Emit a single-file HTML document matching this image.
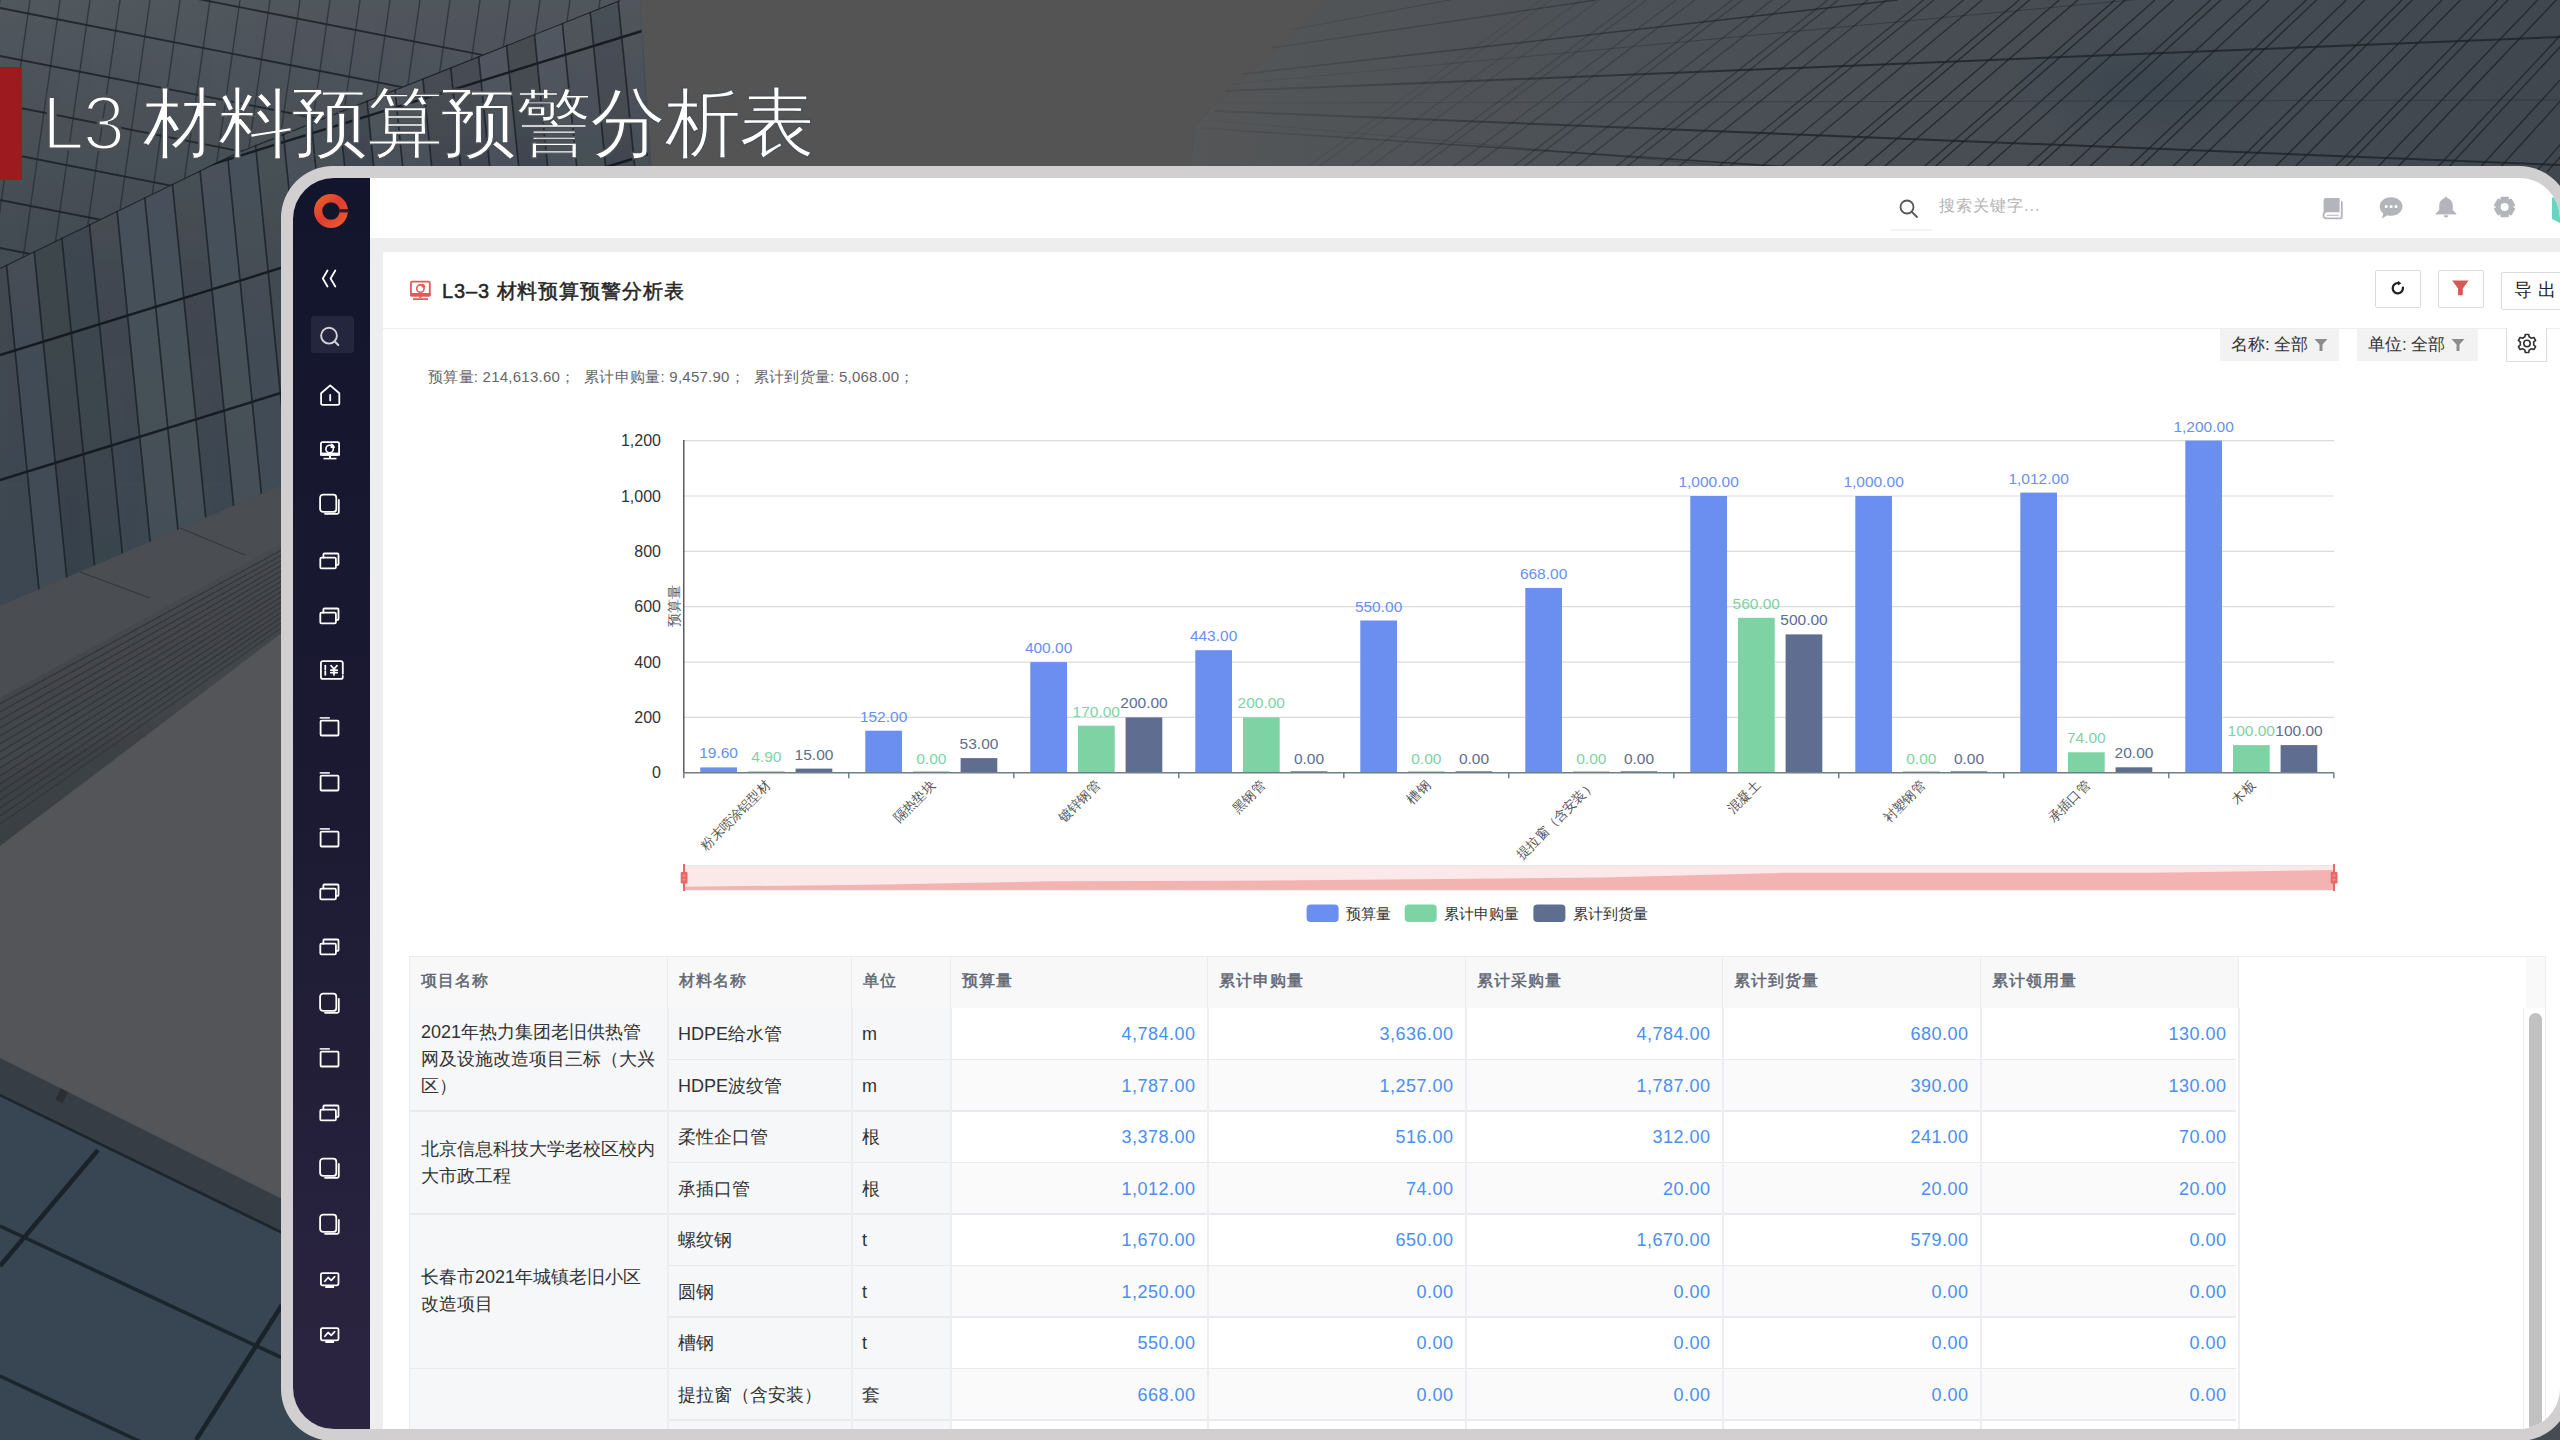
<!DOCTYPE html><html><head><meta charset="utf-8"><title>L3 材料预算预警分析表</title><style>
*{box-sizing:border-box;margin:0;padding:0}
html,body{width:2560px;height:1440px;overflow:hidden;background:#454c53;font-family:"Liberation Sans", sans-serif}
.bg{position:absolute;left:0;top:0}
.abs{position:absolute}
.redbar{position:absolute;left:0;top:67px;width:22px;height:113px;background:#9d1b1f}
.title{position:absolute;left:42px;top:78px;font-size:76px;line-height:90px;font-weight:300;color:#fff;white-space:nowrap;letter-spacing:-1.5px;-webkit-text-stroke:1.4px #4a5056}
.frame{position:absolute;left:281px;top:166px;width:2290px;height:1275px;background:#d1cfd0;border-radius:52px}
.screen{position:absolute;left:293px;top:178px;width:2267px;height:1251px;border-radius:41px;overflow:hidden;background:#eeeeee}
.pg{position:absolute;left:-293px;top:-178px;width:2560px;height:1440px}
.side{position:absolute;left:293px;top:178px;width:77px;height:1262px;background:linear-gradient(180deg,#12152b 0%,#1c1a33 50%,#2c2541 100%)}
.hdr{position:absolute;left:370px;top:178px;width:2190px;height:60px;background:#fff}
.card{position:absolute;left:383px;top:252px;width:2177px;height:1200px;background:#fff}
.t{position:absolute;white-space:nowrap}
</style></head><body><svg class="bg" width="2560" height="1440" viewBox="0 0 2560 1440"><defs><clipPath id="ridgeU"><polygon points="0,0 620,0 236,153 0,268"/></clipPath><clipPath id="ridgeL"><polygon points="0,268 236,153 620,0 700,0 700,700 0,700"/></clipPath><clipPath id="tl"><polygon points="0,0 640,0 652,230 340,230 340,460 0,606"/></clipPath><clipPath id="rb"><polygon points="1330,0 2560,0 2560,240 1190,240 1190,170 1195,125"/></clipPath><clipPath id="bd"><polygon points="0,698 340,512 340,589 0,846"/></clipPath><clipPath id="gl"><polygon points="0,1058 340,1228 340,1440 0,1440"/></clipPath><linearGradient id="bandg" x1="0" y1="0" x2="0.35" y2="1"><stop offset="0" stop-color="#4a4e53"/><stop offset="0.6" stop-color="#44484d"/><stop offset="1" stop-color="#363b40"/></linearGradient><linearGradient id="rbg" x1="0" y1="0" x2="1" y2="0"><stop offset="0" stop-color="#545657"/><stop offset="0.3" stop-color="#4c5157"/><stop offset="1" stop-color="#40474e"/></linearGradient><linearGradient id="tlg" x1="0" y1="0" x2="0" y2="1"><stop offset="0" stop-color="#4a5057"/><stop offset="0.5" stop-color="#434b53"/><stop offset="1" stop-color="#3d4852"/></linearGradient><linearGradient id="fanfade" gradientUnits="userSpaceOnUse" x1="1200" y1="0" x2="1750" y2="0"><stop offset="0" stop-color="#1b2127" stop-opacity="0.1"/><stop offset="1" stop-color="#1b2127" stop-opacity="0.85"/></linearGradient><linearGradient id="topfade" x1="0" y1="0" x2="0" y2="1"><stop offset="0" stop-color="#5e646b" stop-opacity="0.35"/><stop offset="1" stop-color="#5e646b" stop-opacity="0"/></linearGradient><radialGradient id="patch"><stop offset="0" stop-color="#34414d" stop-opacity="0.6"/><stop offset="1" stop-color="#34414d" stop-opacity="0"/></radialGradient></defs><rect width="2560" height="1440" fill="#454c53"/><polygon points="0,0 640,0 652,230 340,230 340,460 0,606" fill="url(#tlg)"/><polygon points="640,0 1330,0 1195,125 1190,170 652,170" fill="#545455"/><polygon points="1330,0 2560,0 2560,240 1190,240 1190,170 1195,125" fill="url(#rbg)"/><polygon points="0,606 340,460 340,512 0,698" fill="#4a4d52"/><line x1="80" y1="572" x2="150" y2="598" stroke="#33383d" stroke-width="1.2"/><line x1="180" y1="528" x2="245" y2="555" stroke="#33383d" stroke-width="1.2"/><polygon points="0,698 340,512 340,589 0,846" fill="url(#bandg)"/><polygon points="0,846 340,589 340,1228 0,1058" fill="#545558"/><polygon points="0,1058 340,1228 340,1440 0,1440" fill="#374652"/><g clip-path="url(#tl)"><rect x="0" y="0" width="660" height="260" fill="url(#topfade)"/><g clip-path="url(#ridgeU)"><line x1="0" y1="-40" x2="660" y2="90" stroke="#161b20" stroke-width="1.8" opacity="0.75"/><line x1="0" y1="8" x2="660" y2="138" stroke="#161b20" stroke-width="1.8" opacity="0.75"/><line x1="0" y1="56" x2="660" y2="186" stroke="#161b20" stroke-width="1.8" opacity="0.75"/><line x1="0" y1="104" x2="660" y2="234" stroke="#161b20" stroke-width="1.8" opacity="0.75"/><line x1="0" y1="152" x2="660" y2="282" stroke="#161b20" stroke-width="1.8" opacity="0.75"/><line x1="0" y1="200" x2="660" y2="330" stroke="#161b20" stroke-width="1.8" opacity="0.75"/><line x1="0" y1="248" x2="660" y2="378" stroke="#161b20" stroke-width="1.8" opacity="0.75"/><line x1="0" y1="296" x2="660" y2="426" stroke="#161b20" stroke-width="1.8" opacity="0.75"/><line x1="-60" y1="0" x2="-100" y2="280" stroke="#1f252b" stroke-width="1.4" opacity="0.6"/><line x1="-30" y1="0" x2="-70" y2="280" stroke="#1f252b" stroke-width="1.4" opacity="0.6"/><line x1="0" y1="0" x2="-40" y2="280" stroke="#1f252b" stroke-width="1.4" opacity="0.6"/><line x1="30" y1="0" x2="-10" y2="280" stroke="#1f252b" stroke-width="1.4" opacity="0.6"/><line x1="60" y1="0" x2="20" y2="280" stroke="#1f252b" stroke-width="1.4" opacity="0.6"/><line x1="90" y1="0" x2="50" y2="280" stroke="#1f252b" stroke-width="1.4" opacity="0.6"/><line x1="120" y1="0" x2="80" y2="280" stroke="#1f252b" stroke-width="1.4" opacity="0.6"/><line x1="150" y1="0" x2="110" y2="280" stroke="#1f252b" stroke-width="1.4" opacity="0.6"/><line x1="180" y1="0" x2="140" y2="280" stroke="#1f252b" stroke-width="1.4" opacity="0.6"/><line x1="210" y1="0" x2="170" y2="280" stroke="#1f252b" stroke-width="1.4" opacity="0.6"/><line x1="240" y1="0" x2="200" y2="280" stroke="#1f252b" stroke-width="1.4" opacity="0.6"/><line x1="270" y1="0" x2="230" y2="280" stroke="#1f252b" stroke-width="1.4" opacity="0.6"/><line x1="300" y1="0" x2="260" y2="280" stroke="#1f252b" stroke-width="1.4" opacity="0.6"/><line x1="330" y1="0" x2="290" y2="280" stroke="#1f252b" stroke-width="1.4" opacity="0.6"/><line x1="360" y1="0" x2="320" y2="280" stroke="#1f252b" stroke-width="1.4" opacity="0.6"/><line x1="390" y1="0" x2="350" y2="280" stroke="#1f252b" stroke-width="1.4" opacity="0.6"/><line x1="420" y1="0" x2="380" y2="280" stroke="#1f252b" stroke-width="1.4" opacity="0.6"/><line x1="450" y1="0" x2="410" y2="280" stroke="#1f252b" stroke-width="1.4" opacity="0.6"/><line x1="480" y1="0" x2="440" y2="280" stroke="#1f252b" stroke-width="1.4" opacity="0.6"/><line x1="510" y1="0" x2="470" y2="280" stroke="#1f252b" stroke-width="1.4" opacity="0.6"/><line x1="540" y1="0" x2="500" y2="280" stroke="#1f252b" stroke-width="1.4" opacity="0.6"/><line x1="570" y1="0" x2="530" y2="280" stroke="#1f252b" stroke-width="1.4" opacity="0.6"/><line x1="600" y1="0" x2="560" y2="280" stroke="#1f252b" stroke-width="1.4" opacity="0.6"/><line x1="630" y1="0" x2="590" y2="280" stroke="#1f252b" stroke-width="1.4" opacity="0.6"/><line x1="660" y1="0" x2="620" y2="280" stroke="#1f252b" stroke-width="1.4" opacity="0.6"/><line x1="690" y1="0" x2="650" y2="280" stroke="#1f252b" stroke-width="1.4" opacity="0.6"/></g><g clip-path="url(#ridgeL)"><polygon points="-20,0 9,0 79,700 50,700" fill="#4c5862" opacity="0.25"/><polygon points="9,0 38,0 108,700 79,700" fill="#2f363d" opacity="0.25"/><polygon points="38,0 67,0 137,700 108,700" fill="#353d45" opacity="0.25"/><polygon points="96,0 125,0 195,700 166,700" fill="#56626c" opacity="0.25"/><polygon points="125,0 154,0 224,700 195,700" fill="#56626c" opacity="0.25"/><polygon points="183,0 212,0 282,700 253,700" fill="#56626c" opacity="0.25"/><polygon points="212,0 241,0 311,700 282,700" fill="#4c5862" opacity="0.25"/><polygon points="270,0 299,0 369,700 340,700" fill="#56626c" opacity="0.25"/><polygon points="328,0 357,0 427,700 398,700" fill="#2f363d" opacity="0.25"/><polygon points="357,0 386,0 456,700 427,700" fill="#56626c" opacity="0.25"/><polygon points="386,0 415,0 485,700 456,700" fill="#56626c" opacity="0.25"/><polygon points="415,0 444,0 514,700 485,700" fill="#353d45" opacity="0.25"/><polygon points="444,0 473,0 543,700 514,700" fill="#353d45" opacity="0.25"/><polygon points="473,0 502,0 572,700 543,700" fill="#56626c" opacity="0.25"/><polygon points="502,0 531,0 601,700 572,700" fill="#2f363d" opacity="0.25"/><polygon points="531,0 560,0 630,700 601,700" fill="#56626c" opacity="0.25"/><polygon points="589,0 618,0 688,700 659,700" fill="#353d45" opacity="0.25"/><line x1="0" y1="355" x2="700" y2="138.0" stroke="#14191e" stroke-width="2.4" opacity="0.9"/><line x1="0" y1="480" x2="700" y2="263.0" stroke="#14191e" stroke-width="2.4" opacity="0.9"/><line x1="0" y1="230" x2="700" y2="13.0" stroke="#14191e" stroke-width="2.4" opacity="0.9"/><line x1="-20" y1="0" x2="50" y2="700" stroke="#1a2026" stroke-width="1.7" opacity="0.8"/><line x1="9" y1="0" x2="79" y2="700" stroke="#1a2026" stroke-width="1.7" opacity="0.8"/><line x1="38" y1="0" x2="108" y2="700" stroke="#1a2026" stroke-width="1.7" opacity="0.8"/><line x1="67" y1="0" x2="137" y2="700" stroke="#1a2026" stroke-width="1.7" opacity="0.8"/><line x1="96" y1="0" x2="166" y2="700" stroke="#1a2026" stroke-width="1.7" opacity="0.8"/><line x1="125" y1="0" x2="195" y2="700" stroke="#1a2026" stroke-width="1.7" opacity="0.8"/><line x1="154" y1="0" x2="224" y2="700" stroke="#1a2026" stroke-width="1.7" opacity="0.8"/><line x1="183" y1="0" x2="253" y2="700" stroke="#1a2026" stroke-width="1.7" opacity="0.8"/><line x1="212" y1="0" x2="282" y2="700" stroke="#1a2026" stroke-width="1.7" opacity="0.8"/><line x1="241" y1="0" x2="311" y2="700" stroke="#1a2026" stroke-width="1.7" opacity="0.8"/><line x1="270" y1="0" x2="340" y2="700" stroke="#1a2026" stroke-width="1.7" opacity="0.8"/><line x1="299" y1="0" x2="369" y2="700" stroke="#1a2026" stroke-width="1.7" opacity="0.8"/><line x1="328" y1="0" x2="398" y2="700" stroke="#1a2026" stroke-width="1.7" opacity="0.8"/><line x1="357" y1="0" x2="427" y2="700" stroke="#1a2026" stroke-width="1.7" opacity="0.8"/><line x1="386" y1="0" x2="456" y2="700" stroke="#1a2026" stroke-width="1.7" opacity="0.8"/><line x1="415" y1="0" x2="485" y2="700" stroke="#1a2026" stroke-width="1.7" opacity="0.8"/><line x1="444" y1="0" x2="514" y2="700" stroke="#1a2026" stroke-width="1.7" opacity="0.8"/><line x1="473" y1="0" x2="543" y2="700" stroke="#1a2026" stroke-width="1.7" opacity="0.8"/><line x1="502" y1="0" x2="572" y2="700" stroke="#1a2026" stroke-width="1.7" opacity="0.8"/><line x1="531" y1="0" x2="601" y2="700" stroke="#1a2026" stroke-width="1.7" opacity="0.8"/><line x1="560" y1="0" x2="630" y2="700" stroke="#1a2026" stroke-width="1.7" opacity="0.8"/><line x1="589" y1="0" x2="659" y2="700" stroke="#1a2026" stroke-width="1.7" opacity="0.8"/><line x1="618" y1="0" x2="688" y2="700" stroke="#1a2026" stroke-width="1.7" opacity="0.8"/><line x1="647" y1="0" x2="717" y2="700" stroke="#1a2026" stroke-width="1.7" opacity="0.8"/><line x1="676" y1="0" x2="746" y2="700" stroke="#1a2026" stroke-width="1.7" opacity="0.8"/><line x1="705" y1="0" x2="775" y2="700" stroke="#1a2026" stroke-width="1.7" opacity="0.8"/><polyline points="0,268 236,153 620,0" stroke="#14191e" stroke-width="2" fill="none" opacity="0.8"/></g></g><ellipse cx="2150" cy="85" rx="140" ry="55" fill="url(#patch)"/><g><line x1="1214" y1="111" x2="2560" y2="165" stroke="url(#fanfade)" stroke-width="2.0" opacity="0.9"/><line x1="1225" y1="91" x2="2560" y2="37" stroke="url(#fanfade)" stroke-width="2.0" opacity="0.9"/><line x1="1242" y1="74" x2="1898" y2="0" stroke="url(#fanfade)" stroke-width="1.6" opacity="0.8"/><line x1="1271" y1="48" x2="1596" y2="0" stroke="url(#fanfade)" stroke-width="1.4" opacity="0.7"/><line x1="1203" y1="128" x2="1984" y2="180" stroke="url(#fanfade)" stroke-width="1.6" opacity="0.8"/><line x1="1290" y1="30" x2="1450" y2="0" stroke="url(#fanfade)" stroke-width="1.2" opacity="0.6"/><line x1="1232" y1="84" x2="2560" y2="-40" stroke="url(#fanfade)" stroke-width="1.0" opacity="0.45"/><line x1="1219" y1="103" x2="2560" y2="100" stroke="url(#fanfade)" stroke-width="1.0" opacity="0.4"/><line x1="1208" y1="120" x2="2560" y2="240" stroke="url(#fanfade)" stroke-width="1.0" opacity="0.4"/><line x1="1300.0" y1="172" x2="1540.8" y2="0" stroke="#1c2227" stroke-width="1.3" opacity="0.10"/><line x1="1311.0" y1="172" x2="1551.0" y2="0" stroke="#1c2227" stroke-width="1.3" opacity="0.11"/><line x1="1343.0" y1="172" x2="1580.7" y2="0" stroke="#1c2227" stroke-width="1.3" opacity="0.16"/><line x1="1363.0" y1="172" x2="1599.3" y2="0" stroke="#1c2227" stroke-width="1.3" opacity="0.18"/><line x1="1403.0" y1="172" x2="1636.5" y2="0" stroke="#1c2227" stroke-width="1.3" opacity="0.24"/><line x1="1414.0" y1="172" x2="1646.7" y2="0" stroke="#1c2227" stroke-width="1.3" opacity="0.25"/><line x1="1446.0" y1="172" x2="1676.4" y2="0" stroke="#1c2227" stroke-width="1.3" opacity="0.29"/><line x1="1466.0" y1="172" x2="1695.0" y2="0" stroke="#1c2227" stroke-width="1.3" opacity="0.32"/><line x1="1506.0" y1="172" x2="1732.2" y2="0" stroke="#1c2227" stroke-width="1.3" opacity="0.37"/><line x1="1517.0" y1="172" x2="1742.4" y2="0" stroke="#1c2227" stroke-width="1.3" opacity="0.39"/><line x1="1549.0" y1="172" x2="1772.1" y2="0" stroke="#1c2227" stroke-width="1.3" opacity="0.43"/><line x1="1569.0" y1="172" x2="1790.7" y2="0" stroke="#1c2227" stroke-width="1.3" opacity="0.46"/><line x1="1609.0" y1="172" x2="1827.9" y2="0" stroke="#1c2227" stroke-width="1.3" opacity="0.51"/><line x1="1620.0" y1="172" x2="1838.1" y2="0" stroke="#1c2227" stroke-width="1.3" opacity="0.53"/><line x1="1652.0" y1="172" x2="1867.8" y2="0" stroke="#1c2227" stroke-width="1.3" opacity="0.57"/><line x1="1672.0" y1="172" x2="1886.4" y2="0" stroke="#1c2227" stroke-width="1.3" opacity="0.60"/><line x1="1712.0" y1="172" x2="1923.6" y2="0" stroke="#1c2227" stroke-width="1.3" opacity="0.65"/><line x1="1723.0" y1="172" x2="1933.8" y2="0" stroke="#1c2227" stroke-width="1.3" opacity="0.66"/><line x1="1755.0" y1="172" x2="1963.5" y2="0" stroke="#1c2227" stroke-width="1.3" opacity="0.71"/><line x1="1775.0" y1="172" x2="1982.1" y2="0" stroke="#1c2227" stroke-width="1.3" opacity="0.73"/><line x1="1815.0" y1="172" x2="2019.2" y2="0" stroke="#1c2227" stroke-width="1.3" opacity="0.79"/><line x1="1826.0" y1="172" x2="2029.5" y2="0" stroke="#1c2227" stroke-width="1.3" opacity="0.80"/><line x1="1858.0" y1="172" x2="2059.2" y2="0" stroke="#1c2227" stroke-width="1.3" opacity="0.80"/><line x1="1878.0" y1="172" x2="2077.8" y2="0" stroke="#1c2227" stroke-width="1.3" opacity="0.80"/><line x1="1918.0" y1="172" x2="2114.9" y2="0" stroke="#1c2227" stroke-width="1.3" opacity="0.80"/><line x1="1929.0" y1="172" x2="2125.2" y2="0" stroke="#1c2227" stroke-width="1.3" opacity="0.80"/><line x1="1961.0" y1="172" x2="2154.9" y2="0" stroke="#1c2227" stroke-width="1.3" opacity="0.80"/><line x1="1981.0" y1="172" x2="2173.5" y2="0" stroke="#1c2227" stroke-width="1.3" opacity="0.80"/><line x1="2021.0" y1="172" x2="2210.6" y2="0" stroke="#1c2227" stroke-width="1.3" opacity="0.80"/><line x1="2032.0" y1="172" x2="2220.8" y2="0" stroke="#1c2227" stroke-width="1.3" opacity="0.80"/><line x1="2064.0" y1="172" x2="2250.6" y2="0" stroke="#1c2227" stroke-width="1.3" opacity="0.80"/><line x1="2084.0" y1="172" x2="2269.1" y2="0" stroke="#1c2227" stroke-width="1.3" opacity="0.80"/><line x1="2124.0" y1="172" x2="2306.3" y2="0" stroke="#1c2227" stroke-width="1.3" opacity="0.80"/><line x1="2135.0" y1="172" x2="2316.5" y2="0" stroke="#1c2227" stroke-width="1.3" opacity="0.80"/><line x1="2167.0" y1="172" x2="2346.3" y2="0" stroke="#1c2227" stroke-width="1.3" opacity="0.80"/><line x1="2187.0" y1="172" x2="2364.8" y2="0" stroke="#1c2227" stroke-width="1.3" opacity="0.80"/><line x1="2227.0" y1="172" x2="2402.0" y2="0" stroke="#1c2227" stroke-width="1.3" opacity="0.80"/><line x1="2238.0" y1="172" x2="2412.2" y2="0" stroke="#1c2227" stroke-width="1.3" opacity="0.80"/><line x1="2270.0" y1="172" x2="2441.9" y2="0" stroke="#1c2227" stroke-width="1.3" opacity="0.80"/><line x1="2290.0" y1="172" x2="2460.5" y2="0" stroke="#1c2227" stroke-width="1.3" opacity="0.80"/><line x1="2330.0" y1="172" x2="2497.7" y2="0" stroke="#1c2227" stroke-width="1.3" opacity="0.80"/><line x1="2341.0" y1="172" x2="2507.9" y2="0" stroke="#1c2227" stroke-width="1.3" opacity="0.80"/><line x1="2373.0" y1="172" x2="2537.6" y2="0" stroke="#1c2227" stroke-width="1.3" opacity="0.80"/><line x1="2393.0" y1="172" x2="2556.2" y2="0" stroke="#1c2227" stroke-width="1.3" opacity="0.80"/><line x1="2433.0" y1="172" x2="2593.4" y2="0" stroke="#1c2227" stroke-width="1.3" opacity="0.80"/><line x1="2444.0" y1="172" x2="2603.6" y2="0" stroke="#1c2227" stroke-width="1.3" opacity="0.80"/><line x1="2476.0" y1="172" x2="2633.3" y2="0" stroke="#1c2227" stroke-width="1.3" opacity="0.80"/><line x1="2496.0" y1="172" x2="2651.9" y2="0" stroke="#1c2227" stroke-width="1.3" opacity="0.80"/><line x1="2536.0" y1="172" x2="2689.1" y2="0" stroke="#1c2227" stroke-width="1.3" opacity="0.80"/><line x1="2547.0" y1="172" x2="2699.3" y2="0" stroke="#1c2227" stroke-width="1.3" opacity="0.80"/><line x1="2579.0" y1="172" x2="2730.4" y2="0" stroke="#1c2227" stroke-width="1.3" opacity="0.80"/><line x1="2599.0" y1="172" x2="2750.4" y2="0" stroke="#1c2227" stroke-width="1.3" opacity="0.80"/></g><g clip-path="url(#bd)"><line x1="0" y1="704" x2="340" y2="518.0" stroke="#2f3438" stroke-width="1.1" opacity="0.8"/><line x1="0" y1="712" x2="340" y2="522.6" stroke="#2f3438" stroke-width="1.1" opacity="0.8"/><line x1="0" y1="720" x2="340" y2="527.2" stroke="#2f3438" stroke-width="1.1" opacity="0.8"/><line x1="0" y1="728" x2="340" y2="531.8" stroke="#2f3438" stroke-width="1.1" opacity="0.8"/><line x1="0" y1="736" x2="340" y2="536.4" stroke="#2f3438" stroke-width="1.1" opacity="0.8"/><line x1="0" y1="744" x2="340" y2="541.0" stroke="#2f3438" stroke-width="1.1" opacity="0.8"/><line x1="0" y1="752" x2="340" y2="545.6" stroke="#2f3438" stroke-width="1.1" opacity="0.8"/><line x1="0" y1="760" x2="340" y2="550.2" stroke="#2f3438" stroke-width="1.1" opacity="0.8"/><line x1="0" y1="768" x2="340" y2="554.8" stroke="#2f3438" stroke-width="1.1" opacity="0.8"/><line x1="0" y1="776" x2="340" y2="559.4" stroke="#2f3438" stroke-width="1.1" opacity="0.8"/><line x1="0" y1="784" x2="340" y2="564.0" stroke="#2f3438" stroke-width="1.1" opacity="0.8"/><line x1="0" y1="792" x2="340" y2="568.6" stroke="#2f3438" stroke-width="1.1" opacity="0.8"/><line x1="0" y1="800" x2="340" y2="573.2" stroke="#2f3438" stroke-width="1.1" opacity="0.8"/><line x1="0" y1="808" x2="340" y2="577.8" stroke="#2f3438" stroke-width="1.1" opacity="0.8"/><line x1="0" y1="816" x2="340" y2="582.4" stroke="#2f3438" stroke-width="1.1" opacity="0.8"/><line x1="0" y1="824" x2="340" y2="587.0" stroke="#2f3438" stroke-width="1.1" opacity="0.8"/></g><g clip-path="url(#gl)"><polygon points="0,1058 340,1228 340,1261 0,1095" fill="#363d45"/><line x1="0" y1="1095" x2="340" y2="1261" stroke="#1c242c" stroke-width="2.5"/><line x1="0" y1="1226" x2="340" y2="1385" stroke="#1c242c" stroke-width="3.5"/><line x1="0" y1="1376" x2="340" y2="1535" stroke="#1c242c" stroke-width="3.5"/><line x1="98" y1="1150" x2="0" y2="1266" stroke="#1a222a" stroke-width="4.5"/><line x1="282" y1="1305" x2="196" y2="1440" stroke="#1a222a" stroke-width="4.5"/><rect x="58" y="1088" width="8" height="14" fill="#2a2f34" transform="rotate(25 62 1095)"/></g></svg><div class="redbar"></div><div class="title"><span style="-webkit-text-stroke:3px #4a5056">L3</span> 材料预算预警分析表</div><div class="frame"></div><div class="screen"><div class="pg"><div class="side"></div><svg class="abs" style="left:310px;top:190px" width="42" height="42" viewBox="0 0 42 42"><defs><linearGradient id="lg1" x1="0" y1="0" x2="1" y2="1"><stop offset="0" stop-color="#e8602c"/><stop offset="0.45" stop-color="#e23a30"/><stop offset="1" stop-color="#e9592e"/></linearGradient></defs><circle cx="21" cy="21" r="12.8" fill="none" stroke="url(#lg1)" stroke-width="8.2"/><rect x="29.5" y="19.2" width="10" height="3.2" fill="#3a1524"/></svg><svg class="abs" style="left:318px;top:266px" width="24" height="24" viewBox="0 0 24 24"><path d="M9.5 4.5 L4.8 12.5 L9.5 20.5 M17.3 4.5 L12.6 12.5 L17.3 20.5" stroke="#fff" stroke-width="1.8" fill="none" stroke-linecap="round" stroke-linejoin="round"/></svg><div class="abs" style="left:311px;top:316px;width:43px;height:37px;background:#23263d;border-radius:3px"></div><svg class="abs" style="left:318px;top:324px" width="24" height="24" viewBox="0 0 24 24"><circle cx="11" cy="11.7" r="7.9" stroke="#d2d2d8" stroke-width="1.9" fill="none"/><path d="M16.6 17.3 L20.3 21" stroke="#d2d2d8" stroke-width="2" stroke-linecap="round"/></svg><svg class="abs" style="left:318px;top:383px" width="24" height="24" viewBox="0 0 24 24"><path d="M3.1 10.3 L12.2 2.4 L21.3 10.3 V20.4 A1.5 1.5 0 0 1 19.8 21.9 H4.6 A1.5 1.5 0 0 1 3.1 20.4 Z" stroke="#fff" stroke-width="1.8" fill="none" stroke-linecap="round" stroke-linejoin="round"/><path d="M12.2 11.8 V17.4" stroke="#fff" stroke-width="1.8" fill="none" stroke-linecap="round" stroke-linejoin="round"/></svg><svg class="abs" style="left:318px;top:438px" width="24" height="24" viewBox="0 0 24 24"><rect x="2.9" y="4.2" width="18.2" height="12.6" rx="1.5" stroke="#fff" stroke-width="1.8" fill="none" stroke-linecap="round" stroke-linejoin="round"/><rect x="2" y="14.6" width="20" height="3.1" fill="#fff"/><rect x="11" y="17.5" width="2" height="2.5" fill="#fff"/><rect x="5.5" y="19.8" width="13" height="1.6" fill="#fff"/><circle cx="11.6" cy="11" r="3.7" stroke="#fff" stroke-width="1.6" fill="none"/><path d="M12.6 5.6 V10 H17 A4.4 4.4 0 0 0 12.6 5.6 Z" fill="#fff"/></svg><svg class="abs" style="left:318px;top:492px" width="24" height="24" viewBox="0 0 24 24"><rect x="2.1" y="2.7" width="16.2" height="17.2" rx="3" stroke="#fff" stroke-width="1.8" fill="none" stroke-linecap="round" stroke-linejoin="round"/><path d="M20.8 8 V20 A1.8 1.8 0 0 1 19 21.8 H7" stroke="#fff" stroke-width="1.8" fill="none" stroke-linecap="round" stroke-linejoin="round"/></svg><svg class="abs" style="left:318px;top:549px" width="24" height="24" viewBox="0 0 24 24"><rect x="2.3" y="8.7" width="15.6" height="10.7" rx="1.2" stroke="#fff" stroke-width="1.8" fill="none" stroke-linecap="round" stroke-linejoin="round"/><path d="M5.4 8.7 V5.5 A1 1 0 0 1 6.4 4.5 H19.5 A1 1 0 0 1 20.5 5.5 V14.9 A1 1 0 0 1 19.5 15.9 H17.9" stroke="#fff" stroke-width="1.8" fill="none" stroke-linecap="round" stroke-linejoin="round"/></svg><svg class="abs" style="left:318px;top:604px" width="24" height="24" viewBox="0 0 24 24"><rect x="2.3" y="8.7" width="15.6" height="10.7" rx="1.2" stroke="#fff" stroke-width="1.8" fill="none" stroke-linecap="round" stroke-linejoin="round"/><path d="M5.4 8.7 V5.5 A1 1 0 0 1 6.4 4.5 H19.5 A1 1 0 0 1 20.5 5.5 V14.9 A1 1 0 0 1 19.5 15.9 H17.9" stroke="#fff" stroke-width="1.8" fill="none" stroke-linecap="round" stroke-linejoin="round"/></svg><svg class="abs" style="left:318px;top:658px" width="28" height="24" viewBox="0 0 28 24"><path d="M24.8 15.8 V5.1 A2 2 0 0 0 22.8 3.1 H4.9 A2 2 0 0 0 2.9 5.1 V18.9 A2 2 0 0 0 4.9 20.9 H22.8 A2 2 0 0 0 24.8 18.9 V17.9" stroke="#fff" stroke-width="1.8" fill="none" stroke-linecap="round" stroke-linejoin="round"/><path d="M7.3 7.6 V11.2 M7.3 13.2 V16.8" stroke="#fff" stroke-width="1.8" fill="none" stroke-linecap="round" stroke-linejoin="round"/><path d="M13 7.6 L16 11 L19 7.6 M16 11 V17 M12.8 12.2 H19.2 M12.8 14.7 H19.2" stroke="#fff" stroke-width="1.7" fill="none" stroke-linecap="round"/></svg><svg class="abs" style="left:318px;top:715px" width="24" height="24" viewBox="0 0 24 24"><rect x="2.6" y="5.6" width="17.9" height="14.9" rx="1" stroke="#fff" stroke-width="1.8" fill="none" stroke-linecap="round" stroke-linejoin="round"/><path d="M2.4 2.9 H11.2" stroke="#fff" stroke-width="1.7" stroke-linecap="round" opacity="0.85"/></svg><svg class="abs" style="left:318px;top:770px" width="24" height="24" viewBox="0 0 24 24"><rect x="2.6" y="5.6" width="17.9" height="14.9" rx="1" stroke="#fff" stroke-width="1.8" fill="none" stroke-linecap="round" stroke-linejoin="round"/><path d="M2.4 2.9 H11.2" stroke="#fff" stroke-width="1.7" stroke-linecap="round" opacity="0.85"/></svg><svg class="abs" style="left:318px;top:826px" width="24" height="24" viewBox="0 0 24 24"><rect x="2.6" y="5.6" width="17.9" height="14.9" rx="1" stroke="#fff" stroke-width="1.8" fill="none" stroke-linecap="round" stroke-linejoin="round"/><path d="M2.4 2.9 H11.2" stroke="#fff" stroke-width="1.7" stroke-linecap="round" opacity="0.85"/></svg><svg class="abs" style="left:318px;top:880px" width="24" height="24" viewBox="0 0 24 24"><rect x="2.3" y="8.7" width="15.6" height="10.7" rx="1.2" stroke="#fff" stroke-width="1.8" fill="none" stroke-linecap="round" stroke-linejoin="round"/><path d="M5.4 8.7 V5.5 A1 1 0 0 1 6.4 4.5 H19.5 A1 1 0 0 1 20.5 5.5 V14.9 A1 1 0 0 1 19.5 15.9 H17.9" stroke="#fff" stroke-width="1.8" fill="none" stroke-linecap="round" stroke-linejoin="round"/></svg><svg class="abs" style="left:318px;top:935px" width="24" height="24" viewBox="0 0 24 24"><rect x="2.3" y="8.7" width="15.6" height="10.7" rx="1.2" stroke="#fff" stroke-width="1.8" fill="none" stroke-linecap="round" stroke-linejoin="round"/><path d="M5.4 8.7 V5.5 A1 1 0 0 1 6.4 4.5 H19.5 A1 1 0 0 1 20.5 5.5 V14.9 A1 1 0 0 1 19.5 15.9 H17.9" stroke="#fff" stroke-width="1.8" fill="none" stroke-linecap="round" stroke-linejoin="round"/></svg><svg class="abs" style="left:318px;top:991px" width="24" height="24" viewBox="0 0 24 24"><rect x="2.1" y="2.7" width="16.2" height="17.2" rx="3" stroke="#fff" stroke-width="1.8" fill="none" stroke-linecap="round" stroke-linejoin="round"/><path d="M20.8 8 V20 A1.8 1.8 0 0 1 19 21.8 H7" stroke="#fff" stroke-width="1.8" fill="none" stroke-linecap="round" stroke-linejoin="round"/></svg><svg class="abs" style="left:318px;top:1046px" width="24" height="24" viewBox="0 0 24 24"><rect x="2.6" y="5.6" width="17.9" height="14.9" rx="1" stroke="#fff" stroke-width="1.8" fill="none" stroke-linecap="round" stroke-linejoin="round"/><path d="M2.4 2.9 H11.2" stroke="#fff" stroke-width="1.7" stroke-linecap="round" opacity="0.85"/></svg><svg class="abs" style="left:318px;top:1101px" width="24" height="24" viewBox="0 0 24 24"><rect x="2.3" y="8.7" width="15.6" height="10.7" rx="1.2" stroke="#fff" stroke-width="1.8" fill="none" stroke-linecap="round" stroke-linejoin="round"/><path d="M5.4 8.7 V5.5 A1 1 0 0 1 6.4 4.5 H19.5 A1 1 0 0 1 20.5 5.5 V14.9 A1 1 0 0 1 19.5 15.9 H17.9" stroke="#fff" stroke-width="1.8" fill="none" stroke-linecap="round" stroke-linejoin="round"/></svg><svg class="abs" style="left:318px;top:1156px" width="24" height="24" viewBox="0 0 24 24"><rect x="2.1" y="2.7" width="16.2" height="17.2" rx="3" stroke="#fff" stroke-width="1.8" fill="none" stroke-linecap="round" stroke-linejoin="round"/><path d="M20.8 8 V20 A1.8 1.8 0 0 1 19 21.8 H7" stroke="#fff" stroke-width="1.8" fill="none" stroke-linecap="round" stroke-linejoin="round"/></svg><svg class="abs" style="left:318px;top:1212px" width="24" height="24" viewBox="0 0 24 24"><rect x="2.1" y="2.7" width="16.2" height="17.2" rx="3" stroke="#fff" stroke-width="1.8" fill="none" stroke-linecap="round" stroke-linejoin="round"/><path d="M20.8 8 V20 A1.8 1.8 0 0 1 19 21.8 H7" stroke="#fff" stroke-width="1.8" fill="none" stroke-linecap="round" stroke-linejoin="round"/></svg><svg class="abs" style="left:318px;top:1267px" width="24" height="24" viewBox="0 0 24 24"><rect x="2.9" y="6.1" width="17.6" height="12.25" rx="1.5" stroke="#fff" stroke-width="1.8" fill="none" stroke-linecap="round" stroke-linejoin="round"/><rect x="7.3" y="19" width="8.7" height="2" fill="#fff"/><path d="M6.9 14.25 L10.1 10.5 L13.25 13.3 L16.7 9.6" stroke="#fff" stroke-width="1.7" fill="none" stroke-linecap="round" stroke-linejoin="round"/></svg><svg class="abs" style="left:318px;top:1322px" width="24" height="24" viewBox="0 0 24 24"><rect x="2.9" y="6.1" width="17.6" height="12.25" rx="1.5" stroke="#fff" stroke-width="1.8" fill="none" stroke-linecap="round" stroke-linejoin="round"/><rect x="7.3" y="19" width="8.7" height="2" fill="#fff"/><path d="M6.9 14.25 L10.1 10.5 L13.25 13.3 L16.7 9.6" stroke="#fff" stroke-width="1.7" fill="none" stroke-linecap="round" stroke-linejoin="round"/></svg><div class="hdr"></div><svg class="abs" style="left:1897px;top:197px" width="24" height="24" viewBox="0 0 24 24"><circle cx="10" cy="10" r="6.5" stroke="#555" stroke-width="1.8" fill="none"/><path d="M14.8 14.8 L20 20" stroke="#555" stroke-width="1.8" stroke-linecap="round"/></svg><div class="abs" style="left:1890px;top:229px;width:42px;height:2px;background:#f4f4f4"></div><div class="t" style="left:1939px;top:195px;font-size:16px;line-height:22px;color:#b3b3b3;letter-spacing:1px">搜索关键字...</div><svg class="abs" style="left:2321px;top:196px" width="24" height="24" viewBox="0 0 24 24"><path d="M2.6 4.2 A2.2 2.2 0 0 1 4.8 2 H18.6 V16.2 H5.2 A2.6 2.6 0 0 0 2.6 18.8 Z" fill="#b4b5ba"/><path d="M20.8 5.2 V21.2 A1.2 1.2 0 0 1 19.6 22.4 H4.9 A2.3 2.3 0 0 1 2.6 20.1 V18.6 A2.4 2.4 0 0 1 5 16.2" stroke="#b4b5ba" stroke-width="1.8" fill="none" stroke-linejoin="round"/><path d="M5.6 19.3 H17.6" stroke="#b4b5ba" stroke-width="1.1"/></svg><svg class="abs" style="left:2377px;top:194px" width="26" height="26" viewBox="0 0 24 24"><path d="M13 3 C19 3 23.5 6.8 23.5 11.5 C23.5 16.2 19 20 13 20 C11.8 20 10.7 19.8 9.6 19.5 L4.5 22.5 L5.8 18 C3.7 16.4 2.5 14.1 2.5 11.5 C2.5 6.8 7 3 13 3 Z" fill="#b4b5ba"/><circle cx="8.5" cy="11.5" r="1.4" fill="#fff"/><circle cx="13" cy="11.5" r="1.4" fill="#fff"/><circle cx="17.5" cy="11.5" r="1.4" fill="#fff"/></svg><svg class="abs" style="left:2434px;top:195px" width="24" height="24" viewBox="0 0 24 24"><path d="M12 1.8 L13.2 3.4 C16.6 4.2 18.4 7 18.4 10.6 V15 L22.2 19 H1.8 L5.6 15 V10.6 C5.6 7 7.4 4.2 10.8 3.4 Z" fill="#b4b5ba" stroke="#b4b5ba" stroke-width="0.8" stroke-linejoin="round"/><path d="M9.6 20.2 A2.4 2.2 0 0 0 14.4 20.2 Z" fill="#b4b5ba"/></svg><svg class="abs" style="left:2492px;top:195px" width="25" height="24" viewBox="0 0 25 24"><polygon points="9.54,3.11 15.66,3.11 15.01,5.00 17.45,6.42 18.77,4.91 21.83,10.21 19.86,10.59 19.86,13.41 21.83,13.79 18.77,19.09 17.45,17.58 15.01,19.00 15.66,20.89 9.54,20.89 10.19,19.00 7.75,17.58 6.43,19.09 3.37,13.79 5.34,13.41 5.34,10.59 3.37,10.21 6.43,4.91 7.75,6.42 10.19,5.00" fill="#b4b5ba" stroke="#b4b5ba" stroke-width="2.6" stroke-linejoin="round"/><circle cx="12.6" cy="12" r="8.3" fill="#b4b5ba"/><circle cx="12.6" cy="12" r="4" fill="#fff"/></svg><svg class="abs" style="left:2548px;top:190px" width="12" height="36" viewBox="0 0 12 36"><polygon points="4,8 12,2 12,33 4,29" fill="#66d6c0"/></svg><div class="abs" style="left:370px;top:238px;width:2190px;height:14px;background:#eeeeee"></div><div class="card"></div><div class="abs" style="left:383px;top:328px;width:2177px;height:1px;background:#eeeeee"></div><svg class="abs" style="left:409px;top:280px" width="22" height="22" viewBox="0 0 22 22"><rect x="1.9" y="1.7" width="18.9" height="14" rx="1.4" stroke="#e25a5a" stroke-width="1.8" fill="none"/><rect x="1" y="13.1" width="20.7" height="3.5" rx="1" fill="#e25a5a"/><rect x="10.3" y="16.4" width="2" height="2" fill="#e25a5a"/><rect x="3.9" y="18.2" width="15.2" height="1.8" rx="0.5" fill="#e25a5a"/><circle cx="11.4" cy="8.6" r="3.7" stroke="#e25a5a" stroke-width="1.6" fill="none"/><path d="M12.6 3.8 V7.5 H16.4 A3.9 3.9 0 0 0 12.6 3.8 Z" fill="#e25a5a"/></svg><div class="t" style="left:442px;top:279px;font-size:20px;line-height:24px;font-weight:400;color:#262626;letter-spacing:0.9px;-webkit-text-stroke:0.5px #262626">L3–3 材料预算预警分析表</div><div class="abs" style="left:2375px;top:270px;width:46px;height:38px;border:1px solid #dcdcdc;border-radius:2px;background:#fff"></div><svg class="abs" style="left:2387px;top:278px" width="22" height="22" viewBox="0 0 24 24"><path d="M17.4 10.6 A5.6 5.6 0 1 1 11.6 5.5" stroke="#222" stroke-width="2.5" fill="none" stroke-linecap="round"/><path d="M11.9 2.9 L15.6 5.6 L12.1 8.1 Z" fill="#222"/></svg><div class="abs" style="left:2438px;top:270px;width:46px;height:38px;border:1px solid #dcdcdc;border-radius:2px;background:#fff"></div><svg class="abs" style="left:2450px;top:278px" width="22" height="22" viewBox="0 0 24 24"><path d="M2.3 2.7 H20.3 L14 11.4 V18.9 H8.8 V11.4 Z" fill="#d45a56"/></svg><div class="abs" style="left:2501px;top:272px;width:80px;height:38px;border:1px solid #dcdcdc;border-radius:2px;background:#fff"></div><div class="t" style="left:2514px;top:279px;font-size:18px;line-height:22px;color:#222;letter-spacing:6px">导出</div><div class="abs" style="left:2220px;top:329px;width:119px;height:32px;background:#f2f2f2"></div><div class="t" style="left:2231px;top:334px;font-size:17px;line-height:22px;color:#333">名称: 全部</div><svg class="abs" style="left:2312px;top:336px" width="18" height="18" viewBox="0 0 18 18"><path d="M2.5 3 H15.5 L10.5 8.5 V15 L7.5 15 V8.5 Z" fill="#8c8c8c"/></svg><div class="abs" style="left:2357px;top:329px;width:121px;height:32px;background:#f2f2f2"></div><div class="t" style="left:2368px;top:334px;font-size:17px;line-height:22px;color:#333">单位: 全部</div><svg class="abs" style="left:2449px;top:336px" width="18" height="18" viewBox="0 0 18 18"><path d="M2.5 3 H15.5 L10.5 8.5 V15 L7.5 15 V8.5 Z" fill="#8c8c8c"/></svg><div class="abs" style="left:2506px;top:328px;width:41px;height:34px;border:1px solid #dcdcdc;border-top:none;background:#fff"></div><svg class="abs" style="left:2515px;top:332px" width="24" height="24" viewBox="0 0 24 24"><path d="M10.3 2.5 H13.7 L14.2 5 A7.5 7.5 0 0 1 16.4 6.3 L18.9 5.5 L20.6 8.4 L18.6 10.2 A7.5 7.5 0 0 1 18.6 12.8 L20.6 14.6 L18.9 17.5 L16.4 16.7 A7.5 7.5 0 0 1 14.2 18 L13.7 20.5 H10.3 L9.8 18 A7.5 7.5 0 0 1 7.6 16.7 L5.1 17.5 L3.4 14.6 L5.4 12.8 A7.5 7.5 0 0 1 5.4 10.2 L3.4 8.4 L5.1 5.5 L7.6 6.3 A7.5 7.5 0 0 1 9.8 5 Z" stroke="#333" stroke-width="1.6" fill="none" stroke-linejoin="round"/><circle cx="12" cy="11.5" r="3.2" stroke="#333" stroke-width="1.6" fill="none"/></svg><div class="t" style="left:428px;top:367px;font-size:15px;line-height:20px;color:#666;letter-spacing:0.25px">预算量: 214,613.60；&nbsp; 累计申购量: 9,457.90；&nbsp; 累计到货量: 5,068.00；</div><svg class="abs" style="left:0;top:0" width="2560" height="1000"><line x1="683.8" y1="717.4" x2="2334" y2="717.4" stroke="#dbdbdb" stroke-width="1.2"/><line x1="683.8" y1="662.1" x2="2334" y2="662.1" stroke="#dbdbdb" stroke-width="1.2"/><line x1="683.8" y1="606.7" x2="2334" y2="606.7" stroke="#dbdbdb" stroke-width="1.2"/><line x1="683.8" y1="551.3" x2="2334" y2="551.3" stroke="#dbdbdb" stroke-width="1.2"/><line x1="683.8" y1="496.0" x2="2334" y2="496.0" stroke="#dbdbdb" stroke-width="1.2"/><line x1="683.8" y1="440.6" x2="2334" y2="440.6" stroke="#dbdbdb" stroke-width="1.2"/><line x1="683.8" y1="440.1" x2="683.8" y2="772.8" stroke="#333" stroke-width="1.2"/><rect x="700.3" y="767.4" width="36.7" height="5.4" fill="#6a8ff0"/><rect x="748.0" y="771.3" width="36.7" height="1.5" fill="#7ed3a4"/><rect x="795.6" y="768.6" width="36.7" height="4.2" fill="#5e6d90"/><rect x="865.3" y="730.7" width="36.7" height="42.1" fill="#6a8ff0"/><rect x="913.0" y="771.3" width="36.7" height="1.5" fill="#7ed3a4"/><rect x="960.6" y="758.1" width="36.7" height="14.7" fill="#5e6d90"/><rect x="1030.3" y="662.1" width="36.7" height="110.7" fill="#6a8ff0"/><rect x="1078.0" y="725.7" width="36.7" height="47.1" fill="#7ed3a4"/><rect x="1125.6" y="717.4" width="36.7" height="55.4" fill="#5e6d90"/><rect x="1195.3" y="650.2" width="36.7" height="122.6" fill="#6a8ff0"/><rect x="1243.0" y="717.4" width="36.7" height="55.4" fill="#7ed3a4"/><rect x="1290.6" y="771.3" width="36.7" height="1.5" fill="#5e6d90"/><rect x="1360.3" y="620.5" width="36.7" height="152.3" fill="#6a8ff0"/><rect x="1408.0" y="771.3" width="36.7" height="1.5" fill="#7ed3a4"/><rect x="1455.6" y="771.3" width="36.7" height="1.5" fill="#5e6d90"/><rect x="1525.3" y="587.9" width="36.7" height="184.9" fill="#6a8ff0"/><rect x="1573.0" y="771.3" width="36.7" height="1.5" fill="#7ed3a4"/><rect x="1620.6" y="771.3" width="36.7" height="1.5" fill="#5e6d90"/><rect x="1690.3" y="496.0" width="36.7" height="276.8" fill="#6a8ff0"/><rect x="1738.0" y="617.8" width="36.7" height="155.0" fill="#7ed3a4"/><rect x="1785.6" y="634.4" width="36.7" height="138.4" fill="#5e6d90"/><rect x="1855.3" y="496.0" width="36.7" height="276.8" fill="#6a8ff0"/><rect x="1903.0" y="771.3" width="36.7" height="1.5" fill="#7ed3a4"/><rect x="1950.6" y="771.3" width="36.7" height="1.5" fill="#5e6d90"/><rect x="2020.3" y="492.6" width="36.7" height="280.2" fill="#6a8ff0"/><rect x="2068.0" y="752.3" width="36.7" height="20.5" fill="#7ed3a4"/><rect x="2115.6" y="767.3" width="36.7" height="5.5" fill="#5e6d90"/><rect x="2185.3" y="440.6" width="36.7" height="332.2" fill="#6a8ff0"/><rect x="2233.0" y="745.1" width="36.7" height="27.7" fill="#7ed3a4"/><rect x="2280.6" y="745.1" width="36.7" height="27.7" fill="#5e6d90"/><line x1="683.8" y1="772.8" x2="2334" y2="772.8" stroke="#6e7f86" stroke-width="1.5"/><line x1="683.8" y1="772.8" x2="683.8" y2="778.3" stroke="#6e7f86" stroke-width="1.5"/><line x1="848.8" y1="772.8" x2="848.8" y2="778.3" stroke="#6e7f86" stroke-width="1.5"/><line x1="1013.8" y1="772.8" x2="1013.8" y2="778.3" stroke="#6e7f86" stroke-width="1.5"/><line x1="1178.8" y1="772.8" x2="1178.8" y2="778.3" stroke="#6e7f86" stroke-width="1.5"/><line x1="1343.8" y1="772.8" x2="1343.8" y2="778.3" stroke="#6e7f86" stroke-width="1.5"/><line x1="1508.8" y1="772.8" x2="1508.8" y2="778.3" stroke="#6e7f86" stroke-width="1.5"/><line x1="1673.8" y1="772.8" x2="1673.8" y2="778.3" stroke="#6e7f86" stroke-width="1.5"/><line x1="1838.8" y1="772.8" x2="1838.8" y2="778.3" stroke="#6e7f86" stroke-width="1.5"/><line x1="2003.8" y1="772.8" x2="2003.8" y2="778.3" stroke="#6e7f86" stroke-width="1.5"/><line x1="2168.8" y1="772.8" x2="2168.8" y2="778.3" stroke="#6e7f86" stroke-width="1.5"/><line x1="2333.8" y1="772.8" x2="2333.8" y2="778.3" stroke="#6e7f86" stroke-width="1.5"/><text x="718.6" y="758.4" fill="#6a8ff0" font-size="15.5" text-anchor="middle">19.60</text><text x="766.3" y="762.4" fill="#7ed3a4" font-size="15.5" text-anchor="middle">4.90</text><text x="814.0" y="759.6" fill="#5e6d90" font-size="15.5" text-anchor="middle">15.00</text><text x="883.6" y="721.7" fill="#6a8ff0" font-size="15.5" text-anchor="middle">152.00</text><text x="931.3" y="763.8" fill="#7ed3a4" font-size="15.5" text-anchor="middle">0.00</text><text x="979.0" y="749.1" fill="#5e6d90" font-size="15.5" text-anchor="middle">53.00</text><text x="1048.6" y="653.1" fill="#6a8ff0" font-size="15.5" text-anchor="middle">400.00</text><text x="1096.3" y="716.7" fill="#7ed3a4" font-size="15.5" text-anchor="middle">170.00</text><text x="1144.0" y="708.4" fill="#5e6d90" font-size="15.5" text-anchor="middle">200.00</text><text x="1213.6" y="641.2" fill="#6a8ff0" font-size="15.5" text-anchor="middle">443.00</text><text x="1261.3" y="708.4" fill="#7ed3a4" font-size="15.5" text-anchor="middle">200.00</text><text x="1309.0" y="763.8" fill="#5e6d90" font-size="15.5" text-anchor="middle">0.00</text><text x="1378.6" y="611.5" fill="#6a8ff0" font-size="15.5" text-anchor="middle">550.00</text><text x="1426.3" y="763.8" fill="#7ed3a4" font-size="15.5" text-anchor="middle">0.00</text><text x="1474.0" y="763.8" fill="#5e6d90" font-size="15.5" text-anchor="middle">0.00</text><text x="1543.6" y="578.9" fill="#6a8ff0" font-size="15.5" text-anchor="middle">668.00</text><text x="1591.3" y="763.8" fill="#7ed3a4" font-size="15.5" text-anchor="middle">0.00</text><text x="1639.0" y="763.8" fill="#5e6d90" font-size="15.5" text-anchor="middle">0.00</text><text x="1708.6" y="487.0" fill="#6a8ff0" font-size="15.5" text-anchor="middle">1,000.00</text><text x="1756.3" y="608.8" fill="#7ed3a4" font-size="15.5" text-anchor="middle">560.00</text><text x="1804.0" y="625.4" fill="#5e6d90" font-size="15.5" text-anchor="middle">500.00</text><text x="1873.6" y="487.0" fill="#6a8ff0" font-size="15.5" text-anchor="middle">1,000.00</text><text x="1921.3" y="763.8" fill="#7ed3a4" font-size="15.5" text-anchor="middle">0.00</text><text x="1969.0" y="763.8" fill="#5e6d90" font-size="15.5" text-anchor="middle">0.00</text><text x="2038.6" y="483.6" fill="#6a8ff0" font-size="15.5" text-anchor="middle">1,012.00</text><text x="2086.3" y="743.3" fill="#7ed3a4" font-size="15.5" text-anchor="middle">74.00</text><text x="2134.0" y="758.3" fill="#5e6d90" font-size="15.5" text-anchor="middle">20.00</text><text x="2203.6" y="431.6" fill="#6a8ff0" font-size="15.5" text-anchor="middle">1,200.00</text><text x="2251.3" y="736.1" fill="#7ed3a4" font-size="15.5" text-anchor="middle">100.00</text><text x="2299.0" y="736.1" fill="#5e6d90" font-size="15.5" text-anchor="middle">100.00</text><text x="661" y="778.3" fill="#333" font-size="16" text-anchor="end">0</text><text x="661" y="722.9" fill="#333" font-size="16" text-anchor="end">200</text><text x="661" y="667.6" fill="#333" font-size="16" text-anchor="end">400</text><text x="661" y="612.2" fill="#333" font-size="16" text-anchor="end">600</text><text x="661" y="556.8" fill="#333" font-size="16" text-anchor="end">800</text><text x="661" y="501.5" fill="#333" font-size="16" text-anchor="end">1,000</text><text x="661" y="446.1" fill="#333" font-size="16" text-anchor="end">1,200</text><text x="0" y="0" transform="translate(679,606) rotate(-90)" fill="#555" font-size="14" text-anchor="middle">预算量</text><text x="0" y="0" transform="translate(768.3,783.8) rotate(-45)" fill="#555" font-size="13.2" text-anchor="end" dominant-baseline="middle">粉末喷涂铝型材</text><text x="0" y="0" transform="translate(933.3,783.8) rotate(-45)" fill="#555" font-size="13.2" text-anchor="end" dominant-baseline="middle">隔热垫块</text><text x="0" y="0" transform="translate(1098.3,783.8) rotate(-45)" fill="#555" font-size="13.2" text-anchor="end" dominant-baseline="middle">镀锌钢管</text><text x="0" y="0" transform="translate(1263.3,783.8) rotate(-45)" fill="#555" font-size="13.2" text-anchor="end" dominant-baseline="middle">黑钢管</text><text x="0" y="0" transform="translate(1428.3,783.8) rotate(-45)" fill="#555" font-size="13.2" text-anchor="end" dominant-baseline="middle">槽钢</text><text x="0" y="0" transform="translate(1593.3,783.8) rotate(-45)" fill="#555" font-size="13.2" text-anchor="end" dominant-baseline="middle">提拉窗（含安装）</text><text x="0" y="0" transform="translate(1758.3,783.8) rotate(-45)" fill="#555" font-size="13.2" text-anchor="end" dominant-baseline="middle">混凝土</text><text x="0" y="0" transform="translate(1923.3,783.8) rotate(-45)" fill="#555" font-size="13.2" text-anchor="end" dominant-baseline="middle">衬塑钢管</text><text x="0" y="0" transform="translate(2088.3,783.8) rotate(-45)" fill="#555" font-size="13.2" text-anchor="end" dominant-baseline="middle">承插口管</text><text x="0" y="0" transform="translate(2253.3,783.8) rotate(-45)" fill="#555" font-size="13.2" text-anchor="end" dominant-baseline="middle">木板</text><rect x="684" y="865.5" width="1650" height="24.5" fill="#fbe9e9" stroke="#e4e6ea" stroke-width="1"/><polygon points="684,890 684.0,886.7 867.3,884.8 1050.7,881.3 1234.0,880.7 1417.3,879.2 1600.7,877.5 1784.0,872.8 1967.3,872.8 2150.7,872.7 2334.0,870.0 2334,890" fill="#f4b3b3"/><line x1="684" y1="864" x2="684" y2="891" stroke="#e8676a" stroke-width="2"/><rect x="680.7" y="872" width="6.8" height="11.5" rx="0.8" fill="#e86a68"/><rect x="682.6" y="875" width="2.8" height="1.4" fill="#ee9490"/><rect x="682.6" y="879" width="2.8" height="1.4" fill="#ee9490"/><line x1="2334" y1="864" x2="2334" y2="891" stroke="#e8676a" stroke-width="2"/><rect x="2330.7" y="872" width="6.8" height="11.5" rx="0.8" fill="#e86a68"/><rect x="2332.6" y="875" width="2.8" height="1.4" fill="#ee9490"/><rect x="2332.6" y="879" width="2.8" height="1.4" fill="#ee9490"/><rect x="1306.6" y="904.5" width="32" height="17.5" rx="4" fill="#6a8ff0"/><text x="1346.1" y="919" fill="#333" font-size="15">预算量</text><rect x="1404.7" y="904.5" width="32" height="17.5" rx="4" fill="#7ed3a4"/><text x="1444.2" y="919" fill="#333" font-size="15">累计申购量</text><rect x="1533.4" y="904.5" width="32" height="17.5" rx="4" fill="#5e6d90"/><text x="1572.9" y="919" fill="#333" font-size="15">累计到货量</text></svg><div class="abs" style="left:409px;top:956px;width:2137px;height:480px;border:1px solid #ececec;border-bottom:none;background:#fff"></div><div class="abs" style="left:410px;top:957px;width:1828px;height:50.5px;background:#f8f8f9"></div><div class="abs" style="left:2526px;top:957px;width:19px;height:50.5px;background:#f9f9f9"></div><div class="t" style="left:421px;top:970px;font-size:16px;line-height:22px;color:#5e6572;letter-spacing:1px;-webkit-text-stroke:0.45px #5e6572">项目名称</div><div class="t" style="left:679px;top:970px;font-size:16px;line-height:22px;color:#5e6572;letter-spacing:1px;-webkit-text-stroke:0.45px #5e6572">材料名称</div><div class="abs" style="left:667px;top:957px;width:1px;height:50.5px;background:#ebebeb"></div><div class="t" style="left:863px;top:970px;font-size:16px;line-height:22px;color:#5e6572;letter-spacing:1px;-webkit-text-stroke:0.45px #5e6572">单位</div><div class="abs" style="left:851px;top:957px;width:1px;height:50.5px;background:#ebebeb"></div><div class="t" style="left:962px;top:970px;font-size:16px;line-height:22px;color:#5e6572;letter-spacing:1px;-webkit-text-stroke:0.45px #5e6572">预算量</div><div class="abs" style="left:950px;top:957px;width:1px;height:50.5px;background:#ebebeb"></div><div class="t" style="left:1219px;top:970px;font-size:16px;line-height:22px;color:#5e6572;letter-spacing:1px;-webkit-text-stroke:0.45px #5e6572">累计申购量</div><div class="abs" style="left:1207px;top:957px;width:1px;height:50.5px;background:#ebebeb"></div><div class="t" style="left:1477px;top:970px;font-size:16px;line-height:22px;color:#5e6572;letter-spacing:1px;-webkit-text-stroke:0.45px #5e6572">累计采购量</div><div class="abs" style="left:1465px;top:957px;width:1px;height:50.5px;background:#ebebeb"></div><div class="t" style="left:1734px;top:970px;font-size:16px;line-height:22px;color:#5e6572;letter-spacing:1px;-webkit-text-stroke:0.45px #5e6572">累计到货量</div><div class="abs" style="left:1722px;top:957px;width:1px;height:50.5px;background:#ebebeb"></div><div class="t" style="left:1992px;top:970px;font-size:16px;line-height:22px;color:#5e6572;letter-spacing:1px;-webkit-text-stroke:0.45px #5e6572">累计领用量</div><div class="abs" style="left:1980px;top:957px;width:1px;height:50.5px;background:#ebebeb"></div><div class="abs" style="left:2238px;top:957px;width:1px;height:50.5px;background:#ebebeb"></div><div class="abs" style="left:410px;top:1008px;width:540px;height:430px;background:#f6f7f9"></div><div class="abs" style="left:667px;top:1058.5px;width:1569px;height:1.5px;background:#e8eaee"></div><div class="t" style="left:678px;top:1022.0px;font-size:18px;line-height:24px;color:#333">HDPE给水管</div><div class="t" style="left:862px;top:1022.0px;font-size:18px;line-height:24px;color:#333">m</div><div class="t" style="right:1365px;top:1022.0px;font-size:18px;line-height:24px;color:#4a8ff2;text-align:right;letter-spacing:0.5px;margin-right:-0.5px">4,784.00</div><div class="t" style="right:1107px;top:1022.0px;font-size:18px;line-height:24px;color:#4a8ff2;text-align:right;letter-spacing:0.5px;margin-right:-0.5px">3,636.00</div><div class="t" style="right:850px;top:1022.0px;font-size:18px;line-height:24px;color:#4a8ff2;text-align:right;letter-spacing:0.5px;margin-right:-0.5px">4,784.00</div><div class="t" style="right:592px;top:1022.0px;font-size:18px;line-height:24px;color:#4a8ff2;text-align:right;letter-spacing:0.5px;margin-right:-0.5px">680.00</div><div class="t" style="right:334px;top:1022.0px;font-size:18px;line-height:24px;color:#4a8ff2;text-align:right;letter-spacing:0.5px;margin-right:-0.5px">130.00</div><div class="abs" style="left:950px;top:1059.5px;width:1286px;height:51.5px;background:#fafafa"></div><div class="abs" style="left:667px;top:1110.0px;width:1569px;height:1.5px;background:#e8eaee"></div><div class="t" style="left:678px;top:1073.5px;font-size:18px;line-height:24px;color:#333">HDPE波纹管</div><div class="t" style="left:862px;top:1073.5px;font-size:18px;line-height:24px;color:#333">m</div><div class="t" style="right:1365px;top:1073.5px;font-size:18px;line-height:24px;color:#4a8ff2;text-align:right;letter-spacing:0.5px;margin-right:-0.5px">1,787.00</div><div class="t" style="right:1107px;top:1073.5px;font-size:18px;line-height:24px;color:#4a8ff2;text-align:right;letter-spacing:0.5px;margin-right:-0.5px">1,257.00</div><div class="t" style="right:850px;top:1073.5px;font-size:18px;line-height:24px;color:#4a8ff2;text-align:right;letter-spacing:0.5px;margin-right:-0.5px">1,787.00</div><div class="t" style="right:592px;top:1073.5px;font-size:18px;line-height:24px;color:#4a8ff2;text-align:right;letter-spacing:0.5px;margin-right:-0.5px">390.00</div><div class="t" style="right:334px;top:1073.5px;font-size:18px;line-height:24px;color:#4a8ff2;text-align:right;letter-spacing:0.5px;margin-right:-0.5px">130.00</div><div class="abs" style="left:667px;top:1161.5px;width:1569px;height:1.5px;background:#e8eaee"></div><div class="t" style="left:678px;top:1125.0px;font-size:18px;line-height:24px;color:#333">柔性企口管</div><div class="t" style="left:862px;top:1125.0px;font-size:18px;line-height:24px;color:#333">根</div><div class="t" style="right:1365px;top:1125.0px;font-size:18px;line-height:24px;color:#4a8ff2;text-align:right;letter-spacing:0.5px;margin-right:-0.5px">3,378.00</div><div class="t" style="right:1107px;top:1125.0px;font-size:18px;line-height:24px;color:#4a8ff2;text-align:right;letter-spacing:0.5px;margin-right:-0.5px">516.00</div><div class="t" style="right:850px;top:1125.0px;font-size:18px;line-height:24px;color:#4a8ff2;text-align:right;letter-spacing:0.5px;margin-right:-0.5px">312.00</div><div class="t" style="right:592px;top:1125.0px;font-size:18px;line-height:24px;color:#4a8ff2;text-align:right;letter-spacing:0.5px;margin-right:-0.5px">241.00</div><div class="t" style="right:334px;top:1125.0px;font-size:18px;line-height:24px;color:#4a8ff2;text-align:right;letter-spacing:0.5px;margin-right:-0.5px">70.00</div><div class="abs" style="left:950px;top:1162.5px;width:1286px;height:51.5px;background:#fafafa"></div><div class="abs" style="left:667px;top:1213.0px;width:1569px;height:1.5px;background:#e8eaee"></div><div class="t" style="left:678px;top:1176.5px;font-size:18px;line-height:24px;color:#333">承插口管</div><div class="t" style="left:862px;top:1176.5px;font-size:18px;line-height:24px;color:#333">根</div><div class="t" style="right:1365px;top:1176.5px;font-size:18px;line-height:24px;color:#4a8ff2;text-align:right;letter-spacing:0.5px;margin-right:-0.5px">1,012.00</div><div class="t" style="right:1107px;top:1176.5px;font-size:18px;line-height:24px;color:#4a8ff2;text-align:right;letter-spacing:0.5px;margin-right:-0.5px">74.00</div><div class="t" style="right:850px;top:1176.5px;font-size:18px;line-height:24px;color:#4a8ff2;text-align:right;letter-spacing:0.5px;margin-right:-0.5px">20.00</div><div class="t" style="right:592px;top:1176.5px;font-size:18px;line-height:24px;color:#4a8ff2;text-align:right;letter-spacing:0.5px;margin-right:-0.5px">20.00</div><div class="t" style="right:334px;top:1176.5px;font-size:18px;line-height:24px;color:#4a8ff2;text-align:right;letter-spacing:0.5px;margin-right:-0.5px">20.00</div><div class="abs" style="left:667px;top:1264.5px;width:1569px;height:1.5px;background:#e8eaee"></div><div class="t" style="left:678px;top:1228.0px;font-size:18px;line-height:24px;color:#333">螺纹钢</div><div class="t" style="left:862px;top:1228.0px;font-size:18px;line-height:24px;color:#333">t</div><div class="t" style="right:1365px;top:1228.0px;font-size:18px;line-height:24px;color:#4a8ff2;text-align:right;letter-spacing:0.5px;margin-right:-0.5px">1,670.00</div><div class="t" style="right:1107px;top:1228.0px;font-size:18px;line-height:24px;color:#4a8ff2;text-align:right;letter-spacing:0.5px;margin-right:-0.5px">650.00</div><div class="t" style="right:850px;top:1228.0px;font-size:18px;line-height:24px;color:#4a8ff2;text-align:right;letter-spacing:0.5px;margin-right:-0.5px">1,670.00</div><div class="t" style="right:592px;top:1228.0px;font-size:18px;line-height:24px;color:#4a8ff2;text-align:right;letter-spacing:0.5px;margin-right:-0.5px">579.00</div><div class="t" style="right:334px;top:1228.0px;font-size:18px;line-height:24px;color:#4a8ff2;text-align:right;letter-spacing:0.5px;margin-right:-0.5px">0.00</div><div class="abs" style="left:950px;top:1265.5px;width:1286px;height:51.5px;background:#fafafa"></div><div class="abs" style="left:667px;top:1316.0px;width:1569px;height:1.5px;background:#e8eaee"></div><div class="t" style="left:678px;top:1279.5px;font-size:18px;line-height:24px;color:#333">圆钢</div><div class="t" style="left:862px;top:1279.5px;font-size:18px;line-height:24px;color:#333">t</div><div class="t" style="right:1365px;top:1279.5px;font-size:18px;line-height:24px;color:#4a8ff2;text-align:right;letter-spacing:0.5px;margin-right:-0.5px">1,250.00</div><div class="t" style="right:1107px;top:1279.5px;font-size:18px;line-height:24px;color:#4a8ff2;text-align:right;letter-spacing:0.5px;margin-right:-0.5px">0.00</div><div class="t" style="right:850px;top:1279.5px;font-size:18px;line-height:24px;color:#4a8ff2;text-align:right;letter-spacing:0.5px;margin-right:-0.5px">0.00</div><div class="t" style="right:592px;top:1279.5px;font-size:18px;line-height:24px;color:#4a8ff2;text-align:right;letter-spacing:0.5px;margin-right:-0.5px">0.00</div><div class="t" style="right:334px;top:1279.5px;font-size:18px;line-height:24px;color:#4a8ff2;text-align:right;letter-spacing:0.5px;margin-right:-0.5px">0.00</div><div class="abs" style="left:667px;top:1367.5px;width:1569px;height:1.5px;background:#e8eaee"></div><div class="t" style="left:678px;top:1331.0px;font-size:18px;line-height:24px;color:#333">槽钢</div><div class="t" style="left:862px;top:1331.0px;font-size:18px;line-height:24px;color:#333">t</div><div class="t" style="right:1365px;top:1331.0px;font-size:18px;line-height:24px;color:#4a8ff2;text-align:right;letter-spacing:0.5px;margin-right:-0.5px">550.00</div><div class="t" style="right:1107px;top:1331.0px;font-size:18px;line-height:24px;color:#4a8ff2;text-align:right;letter-spacing:0.5px;margin-right:-0.5px">0.00</div><div class="t" style="right:850px;top:1331.0px;font-size:18px;line-height:24px;color:#4a8ff2;text-align:right;letter-spacing:0.5px;margin-right:-0.5px">0.00</div><div class="t" style="right:592px;top:1331.0px;font-size:18px;line-height:24px;color:#4a8ff2;text-align:right;letter-spacing:0.5px;margin-right:-0.5px">0.00</div><div class="t" style="right:334px;top:1331.0px;font-size:18px;line-height:24px;color:#4a8ff2;text-align:right;letter-spacing:0.5px;margin-right:-0.5px">0.00</div><div class="abs" style="left:950px;top:1368.5px;width:1286px;height:51.5px;background:#fafafa"></div><div class="abs" style="left:667px;top:1419.0px;width:1569px;height:1.5px;background:#e8eaee"></div><div class="t" style="left:678px;top:1382.5px;font-size:18px;line-height:24px;color:#333">提拉窗（含安装）</div><div class="t" style="left:862px;top:1382.5px;font-size:18px;line-height:24px;color:#333">套</div><div class="t" style="right:1365px;top:1382.5px;font-size:18px;line-height:24px;color:#4a8ff2;text-align:right;letter-spacing:0.5px;margin-right:-0.5px">668.00</div><div class="t" style="right:1107px;top:1382.5px;font-size:18px;line-height:24px;color:#4a8ff2;text-align:right;letter-spacing:0.5px;margin-right:-0.5px">0.00</div><div class="t" style="right:850px;top:1382.5px;font-size:18px;line-height:24px;color:#4a8ff2;text-align:right;letter-spacing:0.5px;margin-right:-0.5px">0.00</div><div class="t" style="right:592px;top:1382.5px;font-size:18px;line-height:24px;color:#4a8ff2;text-align:right;letter-spacing:0.5px;margin-right:-0.5px">0.00</div><div class="t" style="right:334px;top:1382.5px;font-size:18px;line-height:24px;color:#4a8ff2;text-align:right;letter-spacing:0.5px;margin-right:-0.5px">0.00</div><div class="abs" style="left:667px;top:1470.5px;width:1569px;height:1.5px;background:#e8eaee"></div><div class="abs" style="left:410px;top:1110.0px;width:257px;height:1.5px;background:#e8eaee"></div><div class="abs" style="left:410px;top:1213.0px;width:257px;height:1.5px;background:#e8eaee"></div><div class="abs" style="left:410px;top:1367.5px;width:257px;height:1.5px;background:#e8eaee"></div><div class="abs" style="left:667px;top:1008px;width:1.5px;height:430px;background:#eceef1"></div><div class="abs" style="left:851px;top:1008px;width:1.5px;height:430px;background:#eceef1"></div><div class="abs" style="left:950px;top:1008px;width:1.5px;height:430px;background:#eceef1"></div><div class="abs" style="left:1207px;top:1008px;width:1.5px;height:430px;background:#eceef1"></div><div class="abs" style="left:1465px;top:1008px;width:1.5px;height:430px;background:#eceef1"></div><div class="abs" style="left:1722px;top:1008px;width:1.5px;height:430px;background:#eceef1"></div><div class="abs" style="left:1980px;top:1008px;width:1.5px;height:430px;background:#eceef1"></div><div class="abs" style="left:2238px;top:1008px;width:1.5px;height:430px;background:#eceef1"></div><div class="t" style="left:421px;top:1019.0px;font-size:18px;line-height:27px;color:#333">2021年热力集团老旧供热管<br>网及设施改造项目三标（大兴<br>区）</div><div class="t" style="left:421px;top:1135.5px;font-size:18px;line-height:27px;color:#333">北京信息科技大学老校区校内<br>大市政工程</div><div class="t" style="left:421px;top:1264.2px;font-size:18px;line-height:27px;color:#333">长春市2021年城镇老旧小区<br>改造项目</div><div class="abs" style="left:2523px;top:1008px;width:1px;height:430px;background:#ececec"></div><div class="abs" style="left:2529px;top:1013px;width:13px;height:430px;background:#c1c1c1;border-radius:7px"></div></div></div></body></html>
